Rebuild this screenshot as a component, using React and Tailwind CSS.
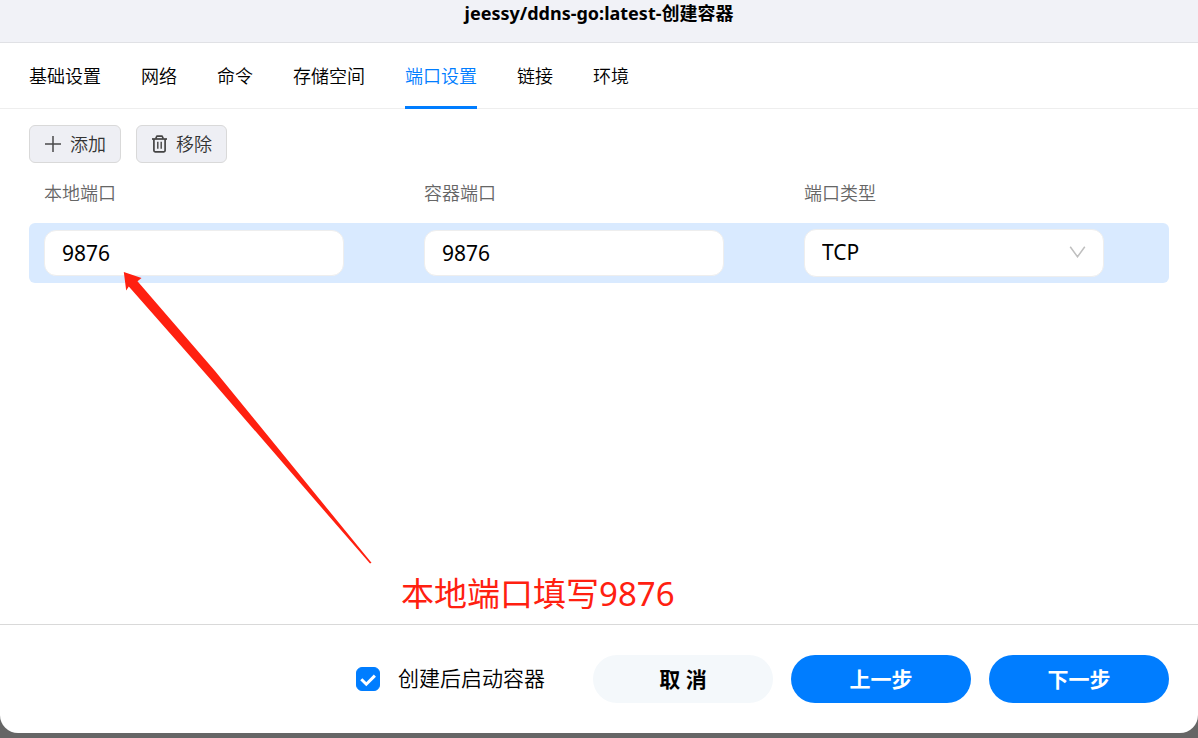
import React, { useState } from 'react';

const tabs = ['基础设置', '网络', '命令', '存储空间', '端口设置', '链接', '环境'];

function PlusIcon() {
  return (
    <svg width="18" height="18" viewBox="0 0 18 18" fill="none" stroke="#4a4a4a" strokeWidth="1.5" aria-hidden="true">
      <path d="M9 1v16M1 9h16" />
    </svg>
  );
}

function TrashIcon() {
  return (
    <svg width="17" height="18" viewBox="0 0 17 18" fill="none" stroke="#444444" strokeWidth="1.7" aria-hidden="true">
      <path d="M1 4h15" />
      <path d="M4.8 3.8l.7-2a1 1 0 0 1 .9-.7h4.2a1 1 0 0 1 .9.7l.7 2" />
      <path d="M2.9 4v11.6a1.2 1.2 0 0 0 1.2 1.2h8.8a1.2 1.2 0 0 0 1.2-1.2V4" />
      <path d="M6.8 6.8v7M10.2 6.8v7" strokeWidth="1.4" />
    </svg>
  );
}

function Annotation() {
  return (
    <div className="absolute top-[163px] left-[123px] pointer-events-none">
      <svg width="250" height="293" viewBox="0 0 250 293" fill="#ff2010" aria-hidden="true">
        <path d="M0.8 0 L18.5 6 L14.5 9.3 L92 99 L248.5 290.8 L247 291.6 L85.5 105 L5.8 14.5 L3.2 18.5 Z" />
      </svg>
      <p className="absolute top-[298px] left-[278px] text-[33px] leading-12 text-[#ff2010] whitespace-nowrap">
        本地端口填写9876
      </p>
    </div>
  );
}

function App() {
  const [activeTab, setActiveTab] = useState('端口设置');
  const [ports, setPorts] = useState([{ id: 1, local: '9876', container: '9876', type: 'TCP' }]);
  const [autoStart, setAutoStart] = useState(true);

  const updatePort = (id, field, value) => {
    setPorts(ports.map(port => (port.id === id ? { ...port, [field]: value } : port)));
  };

  const addPort = () => {
    setPorts([...ports, { id: Date.now(), local: '', container: '', type: 'TCP' }]);
  };

  const removePort = () => {
    setPorts(ports.slice(0, -1));
  };

  return (
    <div className="min-h-screen flex flex-col bg-[#666666] pb-[5px] font-['Noto_Sans','Noto_Sans_CJK_SC',sans-serif] text-black">
      <div className="flex-1 flex flex-col bg-white rounded-b-[18px] overflow-hidden">
        <header className="bg-[#f1f2f7] border-b border-[#e0e1e5] pb-4">
          <h1 className="text-center text-lg leading-[26px] font-bold">jeessy/ddns-go:latest-创建容器</h1>
        </header>

        <nav className="flex gap-10 px-[29px] border-b border-[#eeeeee]">
          {tabs.map(tab => (
            <button
              key={tab}
              type="button"
              onClick={() => setActiveTab(tab)}
              className={
                tab === activeTab
                  ? 'h-[66px] pt-0.5 -mb-px border-b-3 border-[#007dff] text-[#007dff] text-lg font-[350]'
                  : 'h-[66px] pt-0.5 -mb-px border-b-3 border-transparent text-lg font-[350]'
              }
            >
              {tab}
            </button>
          ))}
        </nav>

        <main className="relative flex-1 px-[29px] pt-4">
          <div className="flex gap-[15px]">
            <button
              type="button"
              onClick={addPort}
              className="h-[38px] px-[14px] flex items-center gap-2 bg-[#eeeff4] border border-[#d9d9d9] rounded-md text-lg font-[350] text-[#333333]"
            >
              <PlusIcon />
              添加
            </button>
            <button
              type="button"
              onClick={removePort}
              className="h-[38px] px-[14px] flex items-center gap-2 bg-[#eeeff4] border border-[#d9d9d9] rounded-md text-lg font-[350] text-[#333333]"
            >
              <TrashIcon />
              移除
            </button>
          </div>

          <table className="w-full table-fixed border-separate border-spacing-0">
            <thead>
              <tr className="h-[60px] text-left text-lg text-[#666666]">
                <th className="px-[15px] font-[350]">本地端口</th>
                <th className="px-[15px] font-[350]">容器端口</th>
                <th className="px-[15px] font-[350]">端口类型</th>
              </tr>
            </thead>
            <tbody>
              {ports.map(port => (
                <tr key={port.id} className="h-[60px] bg-[#d9eaff]">
                  <td className="px-[15px] rounded-l-md">
                    <input
                      type="text"
                      aria-label="本地端口"
                      value={port.local}
                      onChange={e => updatePort(port.id, 'local', e.target.value)}
                      className="block w-full max-w-[300px] h-[46px] px-[17px] bg-white border border-[#eeeeee] rounded-xl text-[21px]"
                    />
                  </td>
                  <td className="px-[15px]">
                    <input
                      type="text"
                      aria-label="容器端口"
                      value={port.container}
                      onChange={e => updatePort(port.id, 'container', e.target.value)}
                      className="block w-full max-w-[300px] h-[46px] px-[17px] bg-white border border-[#eeeeee] rounded-xl text-[21px]"
                    />
                  </td>
                  <td className="px-[15px] rounded-r-md">
                    <div className="relative w-full max-w-[300px]">
                      <select
                        aria-label="端口类型"
                        value={port.type}
                        onChange={e => updatePort(port.id, 'type', e.target.value)}
                        className="block w-full h-12 px-[17px] appearance-none bg-white border border-[#eeeeee] rounded-xl text-[21px]"
                      >
                        <option>TCP</option>
                        <option>UDP</option>
                      </select>
                      <svg
                        className="absolute right-[18px] top-[17px] pointer-events-none"
                        width="17"
                        height="12"
                        viewBox="0 0 17 12"
                        fill="none"
                        stroke="#bfbfbf"
                        strokeWidth="1.5"
                        aria-hidden="true"
                      >
                        <path d="M1.2 0.8l7.3 10 7.3-10" />
                      </svg>
                    </div>
                  </td>
                </tr>
              ))}
            </tbody>
          </table>

          <Annotation />
        </main>

        <footer className="flex items-center justify-end gap-[18px] px-[29px] py-[30px] border-t border-[#d9d9d9] text-[21px]">
          <label className="flex items-center gap-[18px] mr-[30px] font-[350]">
            <span className="relative flex">
              <input
                type="checkbox"
                checked={autoStart}
                onChange={e => setAutoStart(e.target.checked)}
                className="peer size-6 appearance-none rounded-md border border-[#d9d9d9] checked:border-[#007dff] checked:bg-[#007dff]"
              />
              <svg
                className="absolute inset-0 hidden peer-checked:block pointer-events-none"
                width="24"
                height="24"
                viewBox="0 0 24 24"
                fill="none"
                stroke="white"
                strokeWidth="3"
                aria-hidden="true"
              >
                <path d="M5.3 12.2l5 5 8.6-8.6" />
              </svg>
            </span>
            创建后启动容器
          </label>
          <button type="button" className="w-[180px] h-12 pt-0.5 rounded-full bg-[#f4f8fb] font-bold">
            取 消
          </button>
          <button type="button" className="w-[180px] h-12 pt-0.5 rounded-full bg-[#007dff] font-bold text-white">
            上一步
          </button>
          <button type="button" className="w-[180px] h-12 pt-0.5 rounded-full bg-[#007dff] font-bold text-white">
            下一步
          </button>
        </footer>
      </div>
    </div>
  );
}

export default App;
